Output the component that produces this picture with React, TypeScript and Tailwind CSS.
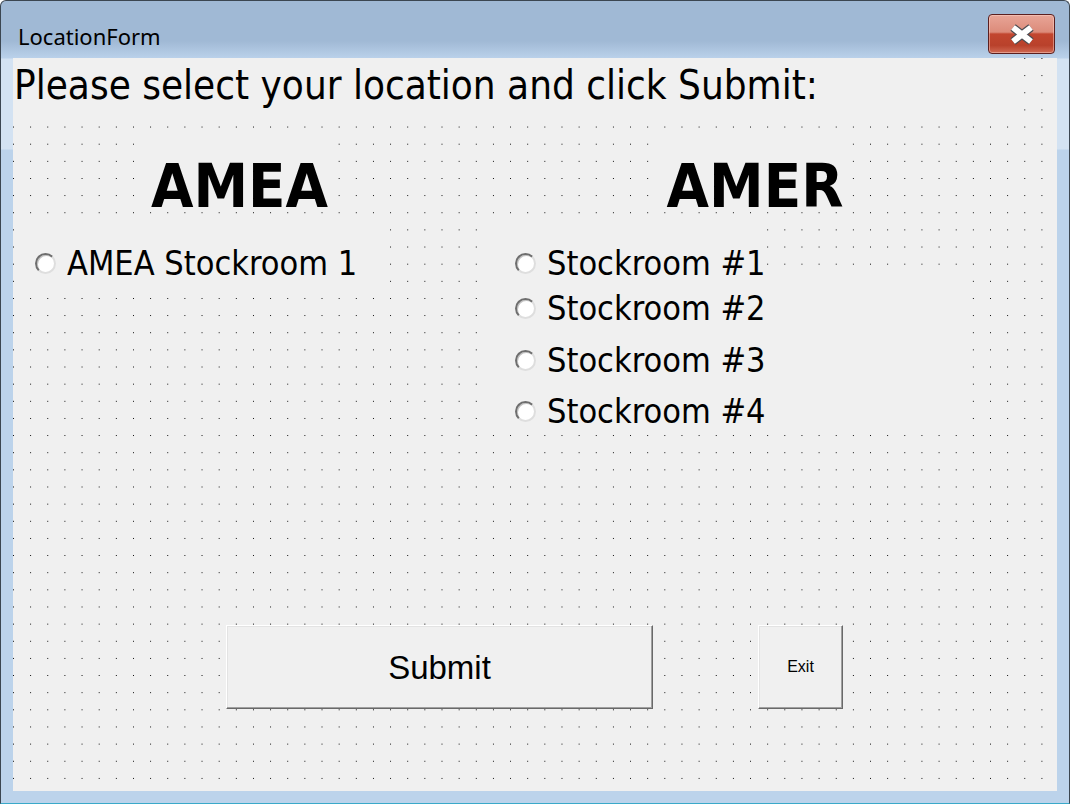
import React from 'react';

const tahoma = "font-['DejaVu_Sans',sans-serif] [font-stretch:condensed]";

const Radio: React.FC = () => (
  <span className="block w-[21px] h-[21px] shrink-0 rounded-full bg-white border-2 border-t-[#6e6e6e] border-l-[#6e6e6e] border-r-[#dedede] border-b-[#dedede] shadow-[inset_1px_1px_0_#c4c4c4]" />
);

const OptionRow: React.FC<{ label: string; className?: string }> = ({ label, className }) => (
  <div className={`flex items-center h-[34px] gap-[11px] ${className ?? ''}`}>
    <Radio />
    <span className={`${tahoma} text-[34px] leading-[34px] text-black whitespace-nowrap`}>{label}</span>
  </div>
);

const FormButton: React.FC<{ label: string; className: string; textClass: string }> = ({ label, className, textClass }) => (
  <button
    className={`bg-[#f0f0f0] border border-t-white border-l-white border-r-[#696969] border-b-[#696969] shadow-[inset_-1px_-1px_0_#a0a0a0,inset_1px_1px_0_#e3e3e3] font-['Liberation_Sans',Arial,sans-serif] text-black flex items-center justify-center ${className}`}
  >
    <span className={textClass}>{label}</span>
  </button>
);

export default function App() {
  return (
    <div className="w-[1070px] h-[804px] bg-white">
      <div className="w-full h-full flex flex-col border border-[#3b4651] border-b-[#3aa9c9] rounded-t-[6px] overflow-hidden bg-[linear-gradient(to_bottom,#a0b9d5_0px,#a0b9d5_40px,#bad1ea_57px,#d3e2f2_58px,#d3e2f2_148px,#bcd3eb_149px)]">
        {/* Title bar */}
        <div className="h-[57px] shrink-0 flex justify-between pl-[17px] pr-[14px]">
          <span className="mt-[24px] font-['Noto_Sans',sans-serif] text-[22px] leading-[22px] text-black">
            LocationForm
          </span>
          <div className="mt-[13px] w-[67px] h-[40px] rounded-[4px] border border-[#5b1f1f] bg-[linear-gradient(to_bottom,#e8a597_0%,#dc8b7a_45%,#c2462f_50%,#b9412b_80%,#d06a54_100%)] shadow-[inset_0_0_0_1px_rgba(255,220,210,0.45)] flex items-center justify-center">
            <svg width="28" height="21" viewBox="0 0 28 21">
              <path d="M5 3.5 L23 17.5 M23 3.5 L5 17.5" stroke="#4d4d52" strokeWidth="8.5" strokeLinecap="butt" />
              <path d="M5 3.5 L23 17.5 M23 3.5 L5 17.5" stroke="#ffffff" strokeWidth="6" strokeLinecap="butt" />
            </svg>
          </div>
        </div>

        {/* Client area */}
        <div className="flex-1 flex px-[12px] pb-[12px]">
          <div className="w-[1044px] h-[733px] bg-[#f0f0f0] bg-[conic-gradient(at_1px_1px,#0000_75%,#000_0)] bg-[length:17.15px_17.15px]">
            {/* Label1 */}
            <div className="w-[1007px] h-[62px] bg-[#f0f0f0] pt-[7px] pl-[1px]">
              <p className={`${tahoma} text-[40px] leading-[40px] text-black whitespace-nowrap`}>
                Please select your location and click Submit:
              </p>
            </div>

            <div className="grid grid-cols-[472px_572px]">
              {/* AMEA column */}
              <div>
                <div className="ml-[129px] mt-[15px] w-[195px] h-[75px] bg-[#f0f0f0] pt-[20px] text-center">
                  <span className={`${tahoma} font-bold text-[61px] leading-[62px] text-black`}>AMEA</span>
                </div>
                <div className="ml-[12px] mt-[12px] w-[360px] h-[66px] bg-[#f0f0f0] pt-[24px] pl-[10px]">
                  <OptionRow label="AMEA Stockroom 1" />
                </div>
              </div>

              {/* AMER column */}
              <div>
                <div className="ml-[175px] mt-[15px] w-[190px] h-[75px] bg-[#f0f0f0] pt-[20px] text-center">
                  <span className={`${tahoma} font-bold text-[61px] leading-[62px] text-black`}>AMER</span>
                </div>
                <div className="mt-[12px] w-[270px] h-[53px] bg-[#f0f0f0] pt-[24px] pl-[30px]">
                  <OptionRow label="Stockroom #1" />
                </div>
                <div className="w-[473px] h-[158px] bg-[#f0f0f0] pt-[16px] pl-[30px] flex flex-col">
                  <OptionRow label="Stockroom #2" />
                  <OptionRow label="Stockroom #3" className="mt-[18px]" />
                  <OptionRow label="Stockroom #4" className="mt-[17px]" />
                </div>
              </div>
            </div>

            {/* Buttons */}
            <div className="flex mt-[192px]">
              <FormButton label="Submit" className="ml-[213px] w-[427px] h-[84px]" textClass="text-[33px] leading-[33px]" />
              <FormButton label="Exit" className="ml-[105px] w-[85px] h-[84px]" textClass="text-[16px] leading-[16px]" />
            </div>
          </div>
        </div>
      </div>
    </div>
  );
}
